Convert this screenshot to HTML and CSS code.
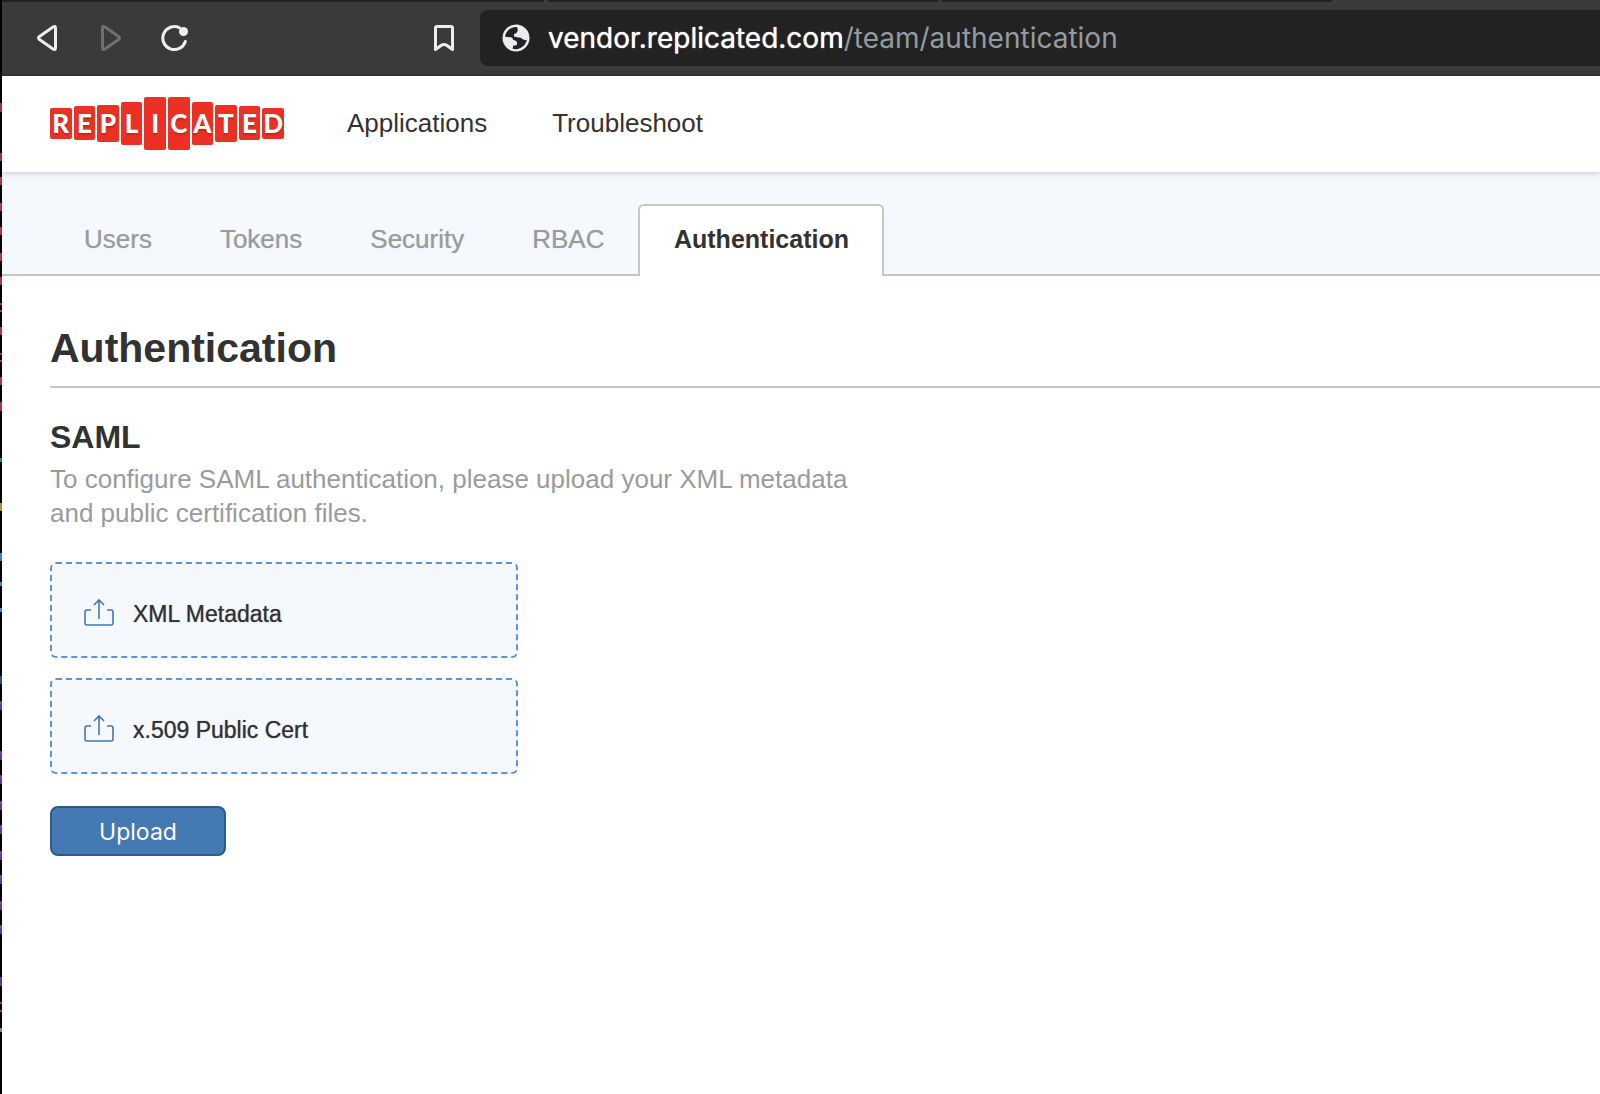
FILE: index.html
```html
<!DOCTYPE html>
<html lang="en">
<head>
<meta charset="utf-8">
<title>Authentication</title>
<link rel="stylesheet" href="styles.css">
</head>
<body>
<div class="desktop-edge" aria-hidden="true">
  <svg width="2" height="1094" viewBox="0 0 2 1094" fill="none" stroke-width="2">
    <path stroke="#a83a44" d="M1 103v9M1 153v8M1 177v8M1 203v8M1 227v8M1 253v8M1 277v8M1 303v2M1 310v2M1 327v8M1 353v2M1 360v2M1 377v8M1 402v9M1 1002v2M1 1010v2"/>
    <path stroke="#2d8a68" d="M1 458v4"/>
    <path stroke="#b08a48" d="M1 503v8"/>
    <path stroke="#3f7fc4" d="M1 553v8M1 582v4M1 608v4"/>
    <path stroke="#2d4f74" d="M1 676v8"/>
    <path stroke="#5a3a9c" d="M1 701v9M1 751v9M1 775v9M1 801v9M1 825v9M1 851v9M1 875v9M1 901v9M1 925v9M1 977v9"/>
    <path stroke="#a03a98" d="M1 702v2M1 752v2M1 776v2M1 802v2M1 826v2M1 852v2M1 876v2M1 902v2M1 926v2"/>
    <path stroke="#76828c" d="M1 1028v4"/>
  </svg>
</div>
<div class="window">
  <div class="tab-strip" aria-hidden="true"><span class="tab tab-first"></span><span class="tab tab-second"></span><span class="tab tab-third"></span></div>
  <div class="toolbar">
    <button class="tool back" type="button" aria-label="Back">
      <svg width="32" height="28" viewBox="0 0 32 28"><path d="M22.500 4V24Q22.500 26.500 20 25L6.500 15.500Q4.500 14 6.500 12.500L20 3Q22.500 1.500 22.500 4Z" fill="none" stroke="#eee" stroke-width="3"/></svg>
    </button>
    <button class="tool forward" type="button" aria-label="Forward" disabled>
      <svg width="32" height="28" viewBox="0 0 32 28"><path d="M6.500 4V24Q6.500 26.500 9 25L22.500 15.500Q24.500 14 22.500 12.500L9 3Q6.500 1.500 6.500 4Z" fill="none" stroke="#707070" stroke-width="3"/></svg>
    </button>
    <button class="tool reload" type="button" aria-label="Reload">
      <svg width="32" height="28" viewBox="0 0 32 28"><path d="M20.500 3.800A11.500 11.500 0 1 0 26.300 17.500" fill="none" stroke="#eee" stroke-width="3" stroke-linecap="round"/><circle cx="24.500" cy="7.500" r="4.500" fill="#eee"/></svg>
    </button>
    <button class="tool bookmark" type="button" aria-label="Bookmark">
      <svg width="32" height="28" viewBox="0 0 32 28"><path d="M7.500 4Q7.500 2.500 9 2.500H23Q24.500 2.500 24.500 4V25.500L19 21.500Q16 19.500 13 21.500L7.500 25.500Z" fill="none" stroke="#eee" stroke-width="3" stroke-linejoin="round"/></svg>
    </button>
    <div class="address">
      <svg width="28" height="28" viewBox="0 0 28 28" aria-hidden="true"><circle cx="14" cy="14" r="13.500" fill="#ececf0"/><path d="M15 3C9 2.500 4 6.500 3 12.500Q5 13.500 9 13.300Q11 13.500 11.200 16Q13.500 16 15 18V20.500Q15 21.500 11.500 21.500L10.500 24.500Q14 26 18 24.200Q23.500 22 25 15.500Q23 17 20.500 15Q19 13 16.500 13.500L12 12.500V10Q15 9.500 15 8Q16.500 6.500 15 3Z" fill="#222"/></svg>
      <span class="url"><span class="host">vendor.replicated.com</span>/team/authentication</span>
    </div>
  </div>
  <header class="site-header">
    <a class="logo" href="#" aria-label="Replicated"><span class="tile s1">R</span><span class="tile s2">E</span><span class="tile s3">P</span><span class="tile s4">L</span><span class="tile s5">I</span><span class="tile s5">C</span><span class="tile s4">A</span><span class="tile s3">T</span><span class="tile s2">E</span><span class="tile s1">D</span></a>
    <nav class="main-nav"><a href="#">Applications</a><a href="#">Troubleshoot</a></nav>
  </header>
  <nav class="sub-nav"><a href="#">Users</a><a href="#">Tokens</a><a href="#">Security</a><a href="#">RBAC</a><a class="active" href="#" aria-current="page">Authentication</a></nav>
  <main class="content">
    <h1>Authentication</h1>
    <h2>SAML</h2>
    <p class="intro">To configure SAML authentication, please upload your XML metadata and public certification files.</p>
    <form class="upload-form">
      <button class="drop" type="button">
        <svg width="32" height="30" viewBox="0 0 32 30" aria-hidden="true"><path d="M8 12H4Q2 12 2 14V25Q2 27 4 27H28Q30 27 30 25V14Q30 12 28 12H24M16 21V2.500M11 7L16 2L21 7" fill="none" stroke="#4279b4" stroke-width="1.600"/></svg>
        <span class="drop-label">XML Metadata</span>
      </button>
      <button class="drop" type="button">
        <svg width="32" height="30" viewBox="0 0 32 30" aria-hidden="true"><path d="M8 12H4Q2 12 2 14V25Q2 27 4 27H28Q30 27 30 25V14Q30 12 28 12H24M16 21V2.500M11 7L16 2L21 7" fill="none" stroke="#4279b4" stroke-width="1.600"/></svg>
        <span class="drop-label">x.509 Public Cert</span>
      </button>
      <button class="submit" type="submit">Upload</button>
    </form>
  </main>
</div>
</body>
</html>
```
FILE: styles.css
```css
* { box-sizing: border-box; }

body {
  display: flex;
  min-height: 100vh;
  margin: 0;
  background: #fff;
  color: #323232;
  font-family: "Liberation Sans", Arial, sans-serif;
  font-size: 26px;
}

a { color: inherit; text-decoration: none; }
button { margin: 0; padding: 0; border: 0; background: none; font: inherit; color: inherit; }
svg { display: block; flex: none; }

.desktop-edge { flex: 0 0 2px; background: #000; }
.window { flex: 1; min-width: 0; }

/* Browser chrome */
.tab-strip { display: flex; gap: 4px; height: 2px; background: #3a3a3a; }
.tab { background: #222; }
.tab-first { width: 542px; }
.tab-second { width: 390px; }
.tab-third { width: 390px; }

.toolbar {
  display: flex;
  align-items: center;
  height: 74px;
  padding: 0 0 1px 31px;
  background: #3a3a3a;
  border-bottom: 1px solid #333;
}
.tool { width: 32px; height: 28px; }
.forward { margin-left: 31px; }
.reload { margin-left: 31px; }
.bookmark { margin-left: 237px; }
.address {
  display: flex;
  flex: 1;
  align-items: center;
  gap: 18px;
  height: 56px;
  margin-left: 20px;
  padding-left: 22px;
  border-radius: 8px 0 0 8px;
  background: #222;
}
.url { color: #949ba0; font-family: Inter, sans-serif; font-size: 28px; white-space: nowrap; }
.host { color: #fff; text-shadow: 0 0 1px #fff; }

/* Site header */
.site-header {
  position: relative;
  display: flex;
  align-items: center;
  height: 96px;
  padding: 0 0 2px 48px;
  background: #fff;
  box-shadow: 0 1px 6px rgba(0, 0, 0, 0.2);
}
.logo { display: flex; align-items: center; gap: 2px; width: 234px; }
.tile {
  display: flex;
  flex: 1;
  align-items: center;
  justify-content: center;
  border-radius: 2px;
  background: #ed3024;
  color: #fff;
  font-family: Lato, sans-serif;
  font-size: 26px;
  font-weight: 900;
  text-shadow: 0 2px 2px rgba(0, 0, 0, 0.2);
}
.s1 { height: 31px; }
.s2 { height: 34px; }
.s3 { height: 37px; }
.s4 { height: 43px; }
.s5 { height: 53px; }
.main-nav { display: flex; gap: 65px; margin-left: 63px; }

/* Team tabs */
.sub-nav {
  display: flex;
  align-items: flex-end;
  height: 104px;
  padding-left: 48px;
  border-bottom: 2px solid #c4c7ca;
  background: #f5f8fd;
  color: #9b9b9b;
}
.sub-nav a {
  height: 72px;
  margin-bottom: -2px;
  padding: 0 32px;
  border: 2px solid transparent;
  border-bottom: 0;
  line-height: 66px;
  text-shadow: 0 0 1px rgba(155, 155, 155, 0.6);
}
.sub-nav .active {
  min-width: 246px;
  border-color: #c4c7ca;
  border-radius: 6px 6px 0 0;
  background: #fff;
  color: #323232;
  font-size: 25px;
  font-weight: 700;
  text-align: center;
  text-shadow: none;
}

/* Authentication settings */
.content { padding: 48px 0 48px 48px; }
h1, h2, p { margin: 0; }
h1 {
  height: 64px;
  border-bottom: 2px solid #c4c7ca;
  font-size: 41px;
  line-height: 48px;
}
h2 { margin-top: 30px; font-size: 32px; line-height: 38px; }
.intro { max-width: 810px; margin-top: 6px; color: #9b9b9b; line-height: 34px; }
.upload-form { display: flex; flex-direction: column; align-items: flex-start; margin-top: 32px; }
.drop {
  display: flex;
  align-items: center;
  gap: 18px;
  width: 468px;
  height: 96px;
  margin-bottom: 20px;
  padding: 6px 0 0 31px;
  border: 2px dashed #5a94e0;
  border-radius: 6px;
  background: #f5f8fd;
  font-size: 23px;
}
.drop-label { padding-top: 2px; text-shadow: 0 0 1px rgba(50, 50, 50, 0.7); }
.submit {
  width: 176px;
  height: 50px;
  margin-top: 12px;
  padding-top: 2px;
  border: 2px solid #2d5a88;
  border-radius: 8px;
  background: #4479b3;
  color: #fff;
  font-family: Inter, sans-serif;
  font-size: 23px;
}
```
